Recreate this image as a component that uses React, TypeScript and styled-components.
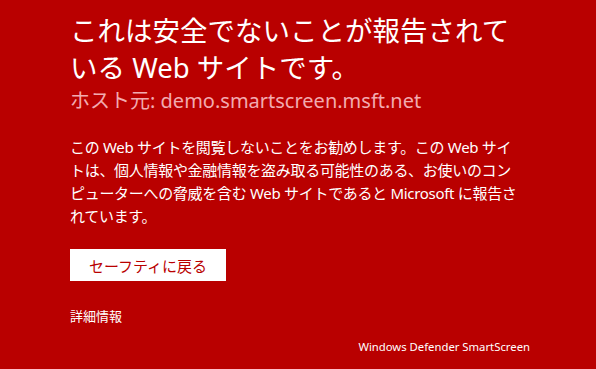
import { createGlobalStyle, styled } from "styled-components";

const GlobalStyle = createGlobalStyle`
  html, body {
    margin: 0;
    padding: 0;
    background: #b90000;
  }
  body {
    font-family: "Segoe UI", "Noto Sans", "Noto Sans CJK JP", sans-serif;
    color: #fff;
  }
`;

const bodyLines = [
  "この Web サイトを閲覧しないことをお勧めします。この Web サイ",
  "トは、個人情報や金融情報を盗み取る可能性のある、お使いのコン",
  "ピューターへの脅威を含む Web サイトであると Microsoft に報告さ",
  "れています。",
];

const App = () => {
  return (
    <Page>
      <GlobalStyle />
      <Content>
        <Title>
          これは安全でないことが報告されて
          <br />
          いる Web サイトです。
        </Title>
        <Host>ホスト元: demo.smartscreen.msft.net</Host>
        <Body>
          {bodyLines.map((line) => (
            <Line key={line}>{line}</Line>
          ))}
        </Body>
        <SafetyButton>セーフティに戻る</SafetyButton>
        <MoreInfo>詳細情報</MoreInfo>
        <Footer>Windows Defender SmartScreen</Footer>
      </Content>
    </Page>
  );
};

export default App;

const Page = styled.div`
  width: 596px;
  height: 369px;
  background: #b90000;
  overflow: hidden;
`;

const Content = styled.div`
  width: 460px;
  padding: 12px 0 0 70px;
  display: flex;
  flex-direction: column;
  align-items: flex-start;
`;

const Title = styled.h1`
  margin: 0;
  font-size: 27.5px;
  font-weight: normal;
  line-height: 37px;
  white-space: nowrap;
`;

const Host = styled.div`
  margin-top: 2px;
  font-size: 20px;
  line-height: 26px;
  color: #f2abb0;
`;

const Body = styled.div`
  margin-top: 22px;
  font-size: 15px;
  line-height: 23px;
`;

const Line = styled.div`
  white-space: nowrap;
  letter-spacing: -0.3px;
`;

const SafetyButton = styled.button`
  margin-top: 21px;
  width: 156px;
  height: 32px;
  padding: 0;
  border: none;
  background: #fff;
  color: #b90000;
  font-family: inherit;
  font-size: 15px;
  cursor: pointer;
`;

const MoreInfo = styled.a`
  margin-top: 25px;
  font-size: 13px;
  color: #fff;
`;

const Footer = styled.div`
  align-self: flex-end;
  margin-top: 14px;
  font-size: 11.3px;
`;
